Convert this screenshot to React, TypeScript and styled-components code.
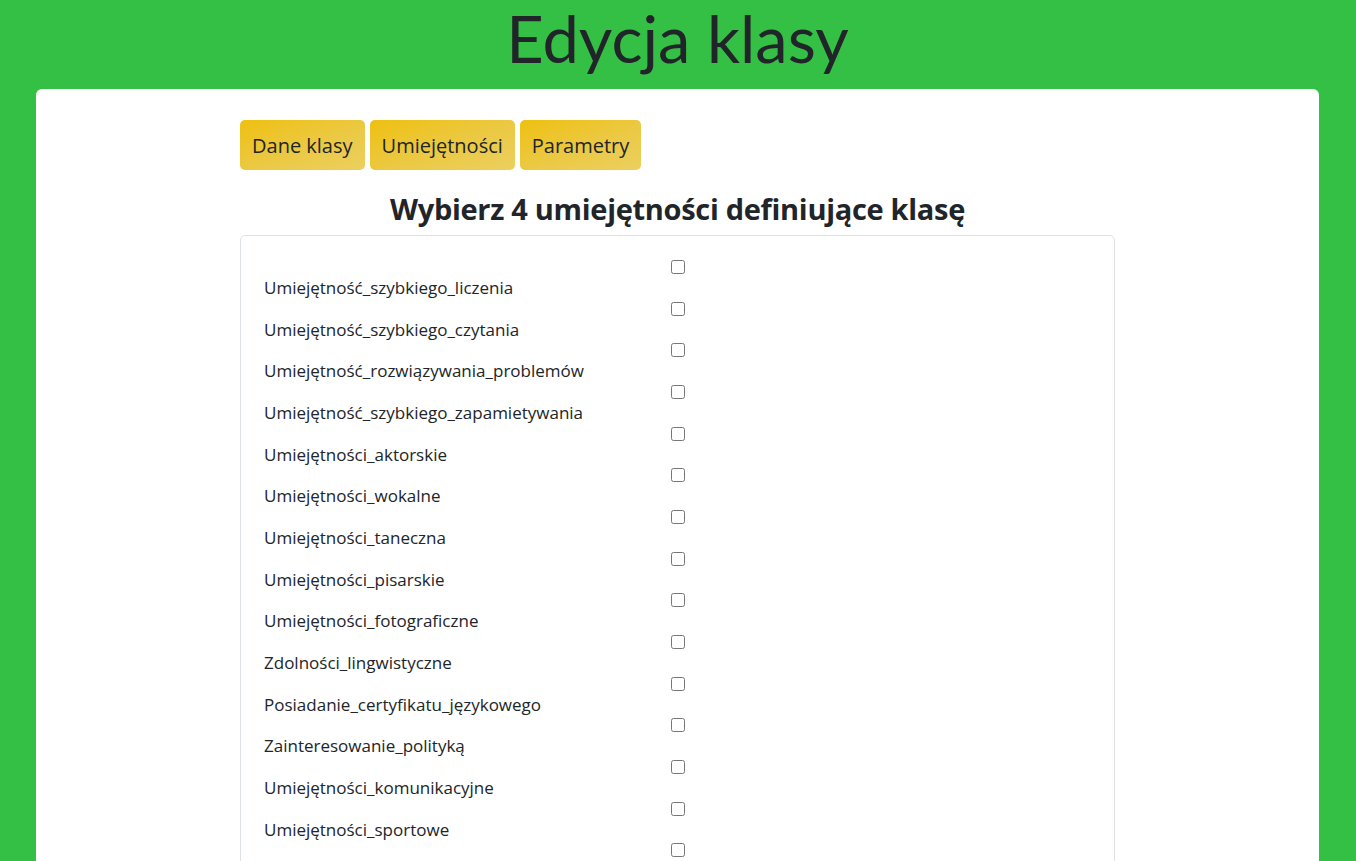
import React from "react";
import styled, {createGlobalStyle} from "styled-components";

const GlobalStyle = createGlobalStyle`
  html, body {
    margin: 0;
    padding: 0;
    background: #33c045;
  }
  body {
    font-family: "Open Sans", "Noto Sans", sans-serif;
    color: #212529;
  }
`;

const Page = styled.div`
  min-height: 861px;
  padding: 0 37px 0 36px;
  overflow: hidden;
`;

const Header = styled.h1`
  margin: 0;
  height: 89px;
  text-align: center;
  font-family: "Lato", sans-serif;
  font-weight: 400;
  font-size: 65px;
  line-height: 76px;
  color: #212529;
`;

const Card = styled.main`
  background: #fff;
  border-radius: 6px 6px 0 0;
  min-height: 800px;
  padding-top: 31px;
`;

const Content = styled.div`
  width: 875px;
  margin: 0 auto;
`;

const Tabs = styled.nav`
  display: flex;
  gap: 5px;
`;

const TabButton = styled.button`
  height: 50px;
  padding: 0 12px;
  border: none;
  border-radius: 5px;
  background: linear-gradient(160deg, #efc011 0%, #ebc944 55%, #ebd05f 100%);
  font-family: "Open Sans", sans-serif;
  font-size: 20px;
  color: #212529;
  cursor: pointer;
`;

const Title = styled.h2`
  margin: 19px 0 6px;
  text-align: center;
  font-family: "Open Sans", sans-serif;
  font-weight: 700;
  font-size: 29px;
  line-height: 40px;
  letter-spacing: -0.3px;
`;

const ListBox = styled.div`
  border: 1px solid #dee2e6;
  border-radius: 5px;
  padding: 24px 23px 0;
`;

const Row = styled.label`
  display: flex;
  align-items: flex-start;
  height: 41.67px;
`;

const SkillName = styled.span`
  width: 407px;
  margin-top: 37px;
  font-size: 17px;
  line-height: 24px;
  transform: translateY(-21px);
  color: #212529;
`;

const Check = styled.input.attrs({type: "checkbox"})`
  width: 14px;
  height: 14px;
  margin: 0;
`;

const skills = [
  "Umiejętność_szybkiego_liczenia",
  "Umiejętność_szybkiego_czytania",
  "Umiejętność_rozwiązywania_problemów",
  "Umiejętność_szybkiego_zapamietywania",
  "Umiejętności_aktorskie",
  "Umiejętności_wokalne",
  "Umiejętności_taneczna",
  "Umiejętności_pisarskie",
  "Umiejętności_fotograficzne",
  "Zdolności_lingwistyczne",
  "Posiadanie_certyfikatu_językowego",
  "Zainteresowanie_polityką",
  "Umiejętności_komunikacyjne",
  "Umiejętności_sportowe",
  "",
];

export default function App() {
  return (
    <Page>
      <GlobalStyle />
      <Header>Edycja klasy</Header>
      <Card>
        <Content>
          <Tabs>
            <TabButton>Dane klasy</TabButton>
            <TabButton>Umiejętności</TabButton>
            <TabButton>Parametry</TabButton>
          </Tabs>
          <Title>Wybierz 4 umiejętności definiujące klasę</Title>
          <ListBox>
            {skills.map((s, i) => (
              <Row key={i}>
                <SkillName>{s}</SkillName>
                <Check />
              </Row>
            ))}
          </ListBox>
        </Content>
      </Card>
    </Page>
  );
}
